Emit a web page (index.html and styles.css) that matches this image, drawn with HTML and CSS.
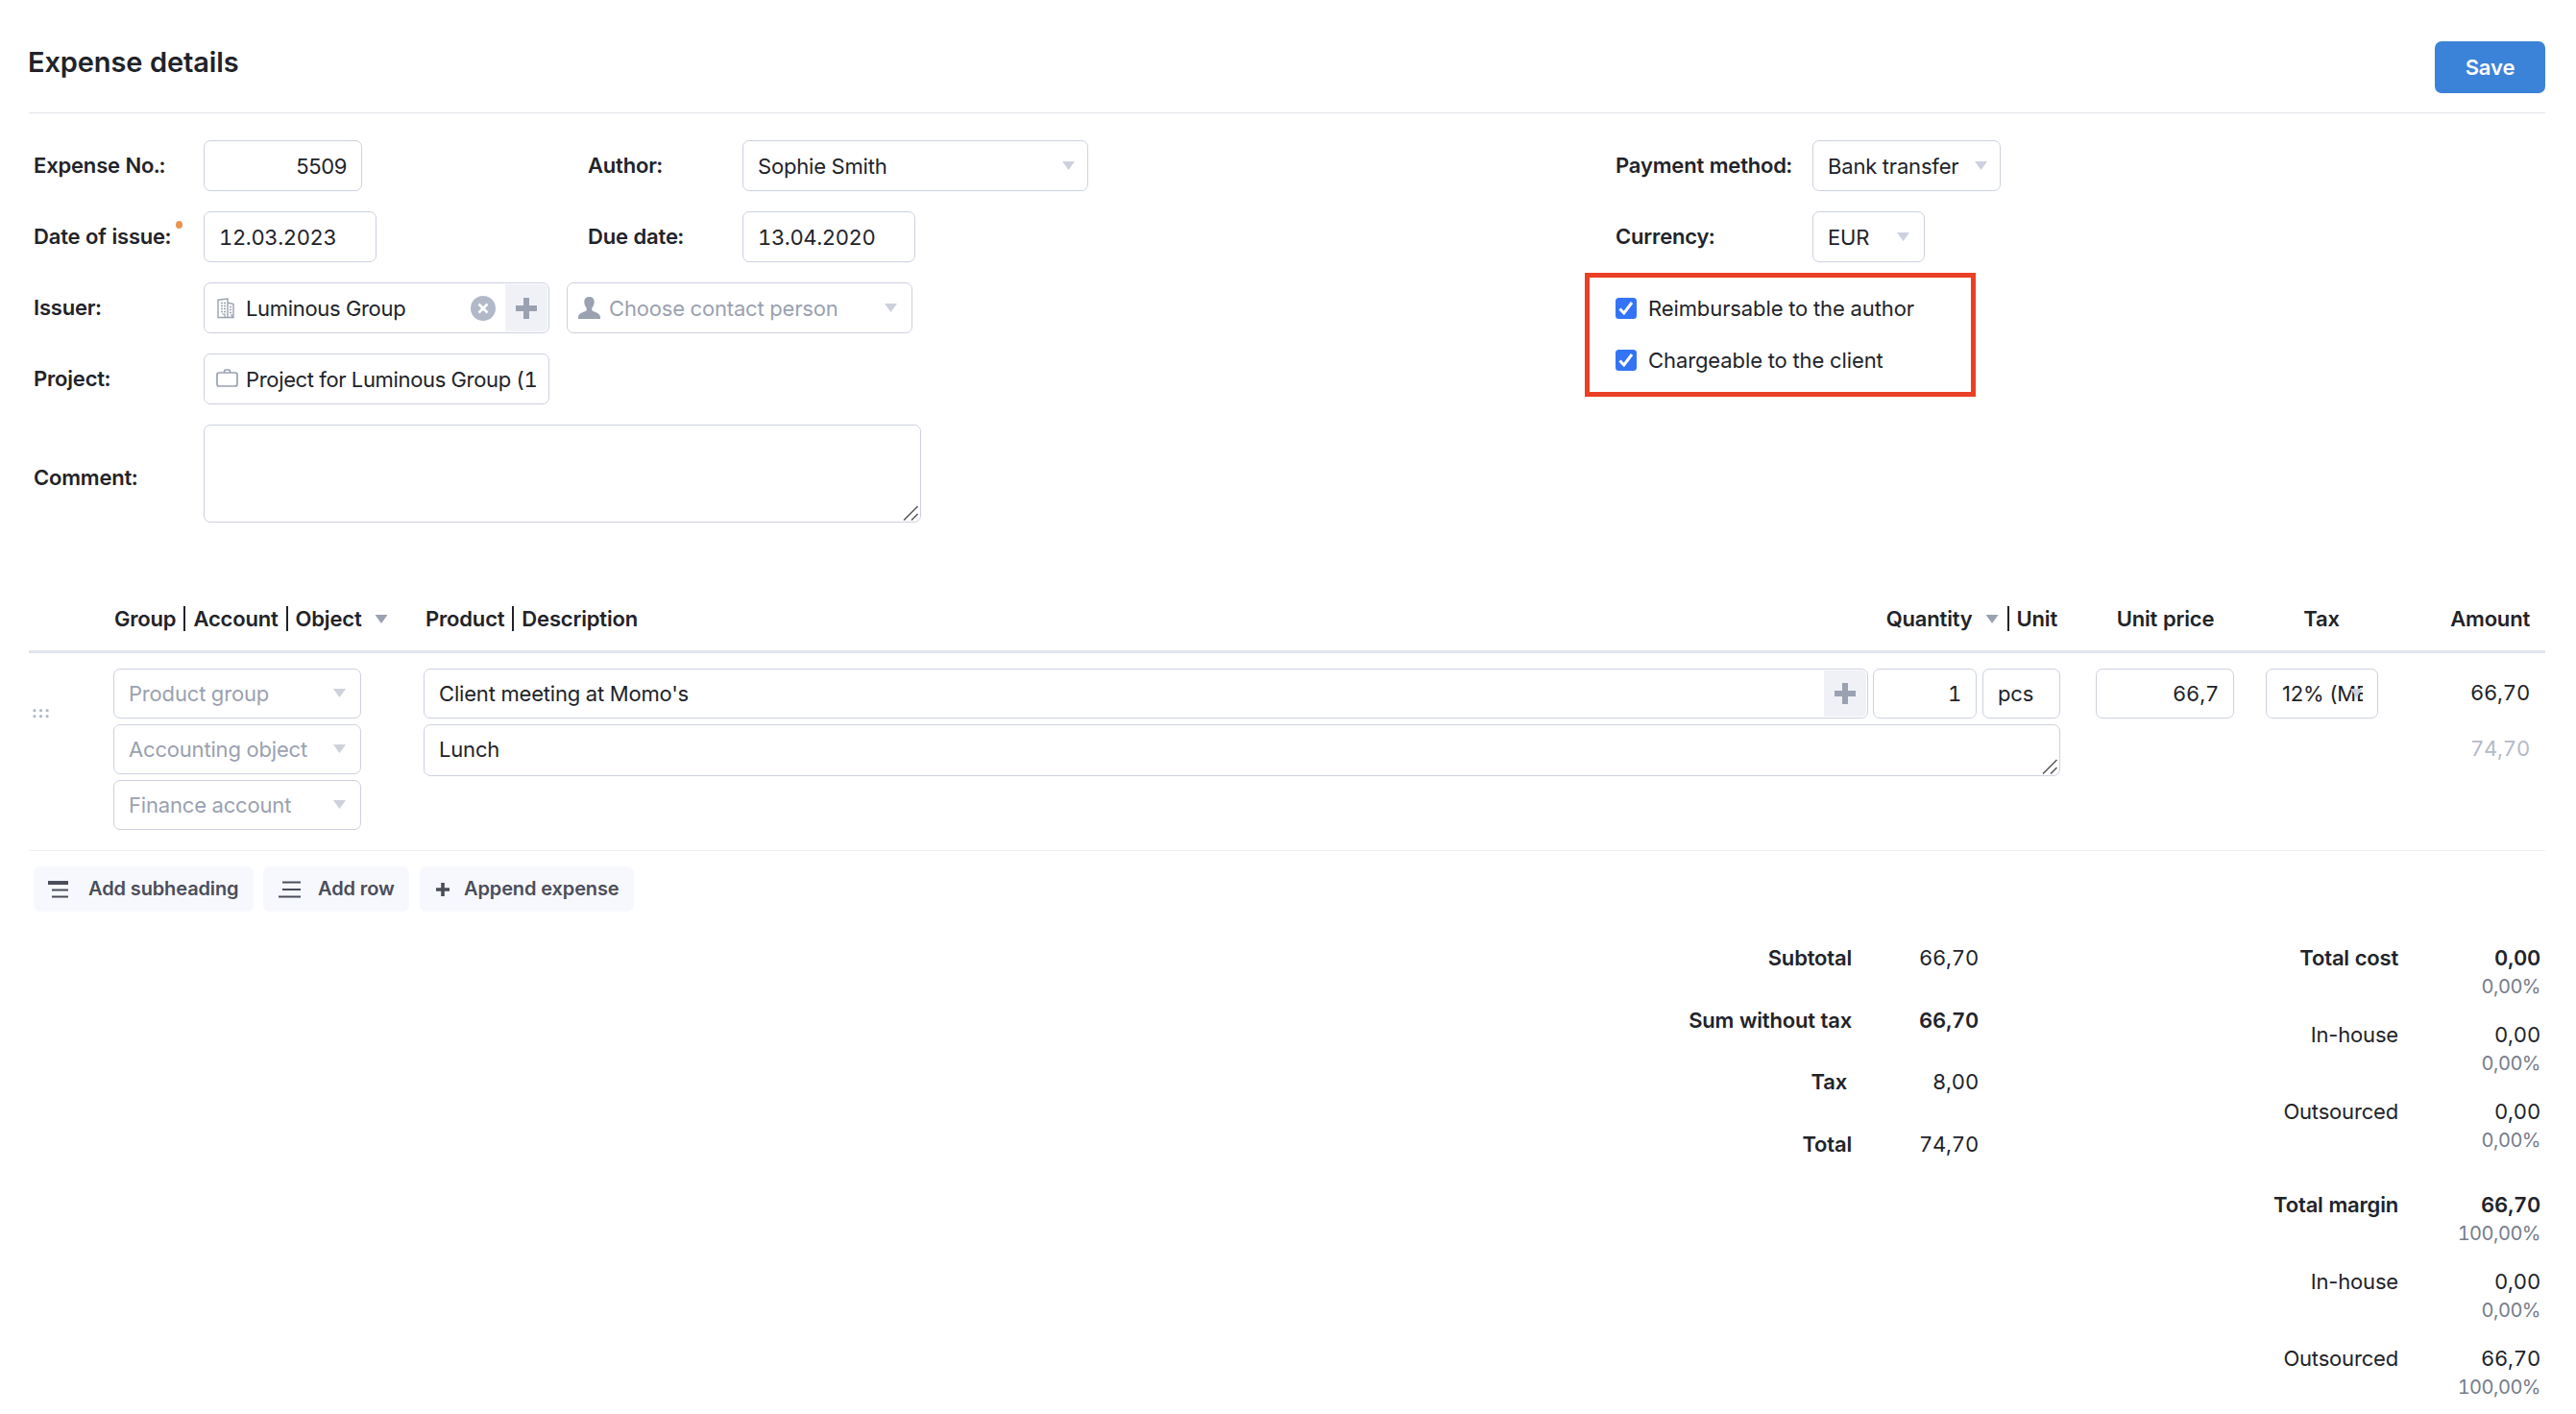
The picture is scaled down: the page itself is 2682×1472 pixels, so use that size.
FILE: index.html
```html
<!DOCTYPE html>
<html lang="en">
<head>
  <meta charset="UTF-8">
  <meta name="viewport" content="width=device-width, initial-scale=1.0">
  <title>Expense details</title>
  <link rel="stylesheet" href="styles.css">
</head>
<body>

  <header class="page-header">
    <h1>Expense details</h1>
    <button class="save" type="button">Save</button>
  </header>

  <section class="form">
    <div class="form-left">
      <div class="form-row">
        <label class="label">Expense No.:</label>
        <div class="field field-number">5509</div>
        <label class="label label-second">Author:</label>
        <div class="field field-author">Sophie Smith <i class="arrow"></i></div>
      </div>
      <div class="form-row">
        <label class="label">Date of issue:<i class="required"></i></label>
        <div class="field field-date">12.03.2023</div>
        <label class="label label-second label-due">Due date:</label>
        <div class="field field-date">13.04.2020</div>
      </div>
      <div class="form-row">
        <label class="label">Issuer:</label>
        <div class="field field-wide has-icon">
          <svg class="icon-building" width="18" height="22" viewBox="0 0 18 22" fill="none" stroke="#9aa1b1">
            <path d="M1 2.2L11 1V20.5H1zM11 5L17 6.5V20.5H11" stroke-width="1.4"/>
            <path d="M4 5.5h5M4 8.5h5M4 11.5h5M4 14.5h5M13 9.5h3M13 12.5h3M13 15.5h3" stroke-width="1.6" stroke-dasharray="2 1"/>
            <path d="M5 17h3v3M14 18h1.500v2" stroke-width="1.2"/>
          </svg>
          <span>Luminous Group</span>
          <svg class="clear" width="26" height="26" viewBox="0 0 26 26">
            <circle cx="13" cy="13" r="13" fill="#b1b8c8"/>
            <path d="M8.500 8.500l9 9M17.500 8.500l-9 9" stroke="#fff" stroke-width="2.600"/>
          </svg>
          <div class="add"><svg width="22" height="22" viewBox="0 0 22 22"><path d="M11 0v22M0 11h22" stroke="#9aa1b0" stroke-width="6"/></svg></div>
        </div>
        <div class="field field-wide field-contact has-icon placeholder">
          <svg class="icon-person" width="23" height="23" viewBox="0 0 23 23" fill="#9aa1b0">
            <path d="M11.500 0C8 0 6.300 2 6.300 5c0 2.600.9 5 2.400 6.500v2.600C7.500 16 0 16.500 0 21v2h23v-2c0-4.500-7.500-5-8.700-6.900v-2.600C15.800 10 16.700 7.600 16.700 5c0-3-1.700-5-5.200-5z"/>
          </svg>
          <span>Choose contact person</span>
          <i class="arrow"></i>
        </div>
      </div>
      <div class="form-row">
        <label class="label">Project:</label>
        <div class="field field-wide has-icon">
          <svg class="icon-case" width="23" height="19" viewBox="0 0 23 19" fill="none" stroke="#9aa1b1" stroke-width="1.700">
            <rect x="1" y="4" width="21" height="14" rx="2"/>
            <path d="M8.500 4V2.500a1.500 1.500 0 0 1 1.500-1.500h3a1.500 1.500 0 0 1 1.500 1.500V4"/>
          </svg>
          <span>Project for Luminous Group (1</span>
        </div>
      </div>
      <div class="form-row">
        <label class="label label-comment">Comment:</label>
        <div class="field field-comment">
          <svg class="grip" width="16" height="16" viewBox="0 0 16 16" stroke="#555" stroke-width="1.500"><path d="M1 15.500L15.500 1M9 15.500L15.500 9"/></svg>
        </div>
      </div>
    </div>

    <div class="form-right">
      <div class="form-row">
        <label class="label label-pay">Payment method:</label>
        <div class="field field-method">Bank transfer <i class="arrow"></i></div>
      </div>
      <div class="form-row">
        <label class="label label-pay">Currency:</label>
        <div class="field field-currency">EUR <i class="arrow"></i></div>
      </div>
      <div class="highlight">
        <div class="check">
          <svg width="22" height="22" viewBox="0 0 22 22"><rect width="22" height="22" rx="3.500" fill="#3374f5"/><path d="M4.500 11.500l4.300 4.500L17 5" fill="none" stroke="#fff" stroke-width="3"/></svg>
          <span>Reimbursable to the author</span>
        </div>
        <div class="check">
          <svg width="22" height="22" viewBox="0 0 22 22"><rect width="22" height="22" rx="3.500" fill="#3374f5"/><path d="M4.500 11.500l4.300 4.500L17 5" fill="none" stroke="#fff" stroke-width="3"/></svg>
          <span>Chargeable to the client</span>
        </div>
      </div>
    </div>
  </section>

  <section class="items">
    <div class="items-head">
      <div class="head-group">Group<b class="pipe"></b>Account<b class="pipe"></b>Object <i class="arrow arrow-dark"></i></div>
      <div class="head-product">Product<b class="pipe"></b>Description</div>
      <div class="head-quantity">Quantity <i class="arrow arrow-dark"></i><b class="pipe"></b>Unit</div>
      <div class="head-price">Unit price</div>
      <div class="head-tax">Tax</div>
      <div class="head-amount">Amount</div>
    </div>

    <div class="item">
      <div class="handle">
        <svg width="17" height="10" viewBox="0 0 17 10" fill="#b4bac9"><circle cx="1.900" cy="1.700" r="1.600"/><circle cx="8.500" cy="1.700" r="1.600"/><circle cx="15.100" cy="1.700" r="1.600"/><circle cx="1.900" cy="7.700" r="1.600"/><circle cx="8.500" cy="7.700" r="1.600"/><circle cx="15.100" cy="7.700" r="1.600"/></svg>
      </div>
      <div class="item-group">
        <div class="field placeholder">Product group <i class="arrow"></i></div>
        <div class="field placeholder">Accounting object <i class="arrow"></i></div>
        <div class="field placeholder">Finance account <i class="arrow"></i></div>
      </div>
      <div class="item-main">
        <div class="item-line">
          <div class="field field-product">
            <span>Client meeting at Momo's</span>
            <div class="add"><svg width="22" height="22" viewBox="0 0 22 22"><path d="M11 0v22M0 11h22" stroke="#9aa1b0" stroke-width="6"/></svg></div>
          </div>
          <div class="field field-quantity">1</div>
          <div class="field field-unit">pcs</div>
        </div>
        <div class="field field-description">
          <span>Lunch</span>
          <svg class="grip" width="16" height="16" viewBox="0 0 16 16" stroke="#555" stroke-width="1.500"><path d="M1 15.500L15.500 1M9 15.500L15.500 9"/></svg>
        </div>
      </div>
      <div class="field field-price">66,7</div>
      <div class="field field-tax"><span>12% (ME</span><i class="arrow"></i></div>
      <div class="item-amount">
        <div>66,70</div>
        <div class="with-tax">74,70</div>
      </div>
    </div>
  </section>

  <div class="actions">
    <button class="action action-sub" type="button">
      <svg width="21" height="18" viewBox="0 0 21 18" stroke="#4a4e5a"><path d="M0 2h21" stroke-width="4"/><path d="M4 9.500h17M4 16.500h17" stroke-width="2"/></svg>
      Add subheading
    </button>
    <button class="action action-row" type="button">
      <svg width="23" height="18" viewBox="0 0 23 18" stroke="#4a4e5a" stroke-width="2"><path d="M4 1.500h19M4 9h19M0 16.500h23"/></svg>
      Add row
    </button>
    <button class="action action-append" type="button">
      <svg width="14" height="14" viewBox="0 0 14 14" stroke="#4a4e5a" stroke-width="3.600"><path d="M7 0v14M0 7h14"/></svg>
      Append expense
    </button>
  </div>

  <section class="totals">
    <div class="sums">
      <div class="sum"><b>Subtotal</b><span>66,70</span></div>
      <div class="sum"><b>Sum without tax</b><b>66,70</b></div>
      <div class="sum"><b class="sum-tax">Tax</b><span>8,00</span></div>
      <div class="sum"><b>Total</b><span>74,70</span></div>
    </div>
    <div class="costs">
      <div class="cost"><b>Total cost</b><div><b>0,00</b><small>0,00%</small></div></div>
      <div class="cost"><span>In-house</span><div>0,00<small>0,00%</small></div></div>
      <div class="cost"><span>Outsourced</span><div>0,00<small>0,00%</small></div></div>
      <div class="cost cost-margin"><b>Total margin</b><div><b>66,70</b><small>100,00%</small></div></div>
      <div class="cost"><span>In-house</span><div>0,00<small>0,00%</small></div></div>
      <div class="cost"><span>Outsourced</span><div>66,70<small>100,00%</small></div></div>
    </div>
  </section>

</body>
</html>
```
FILE: styles.css
```css
* {
  margin: 0;
  padding: 0;
  box-sizing: border-box;
}

body {
  font-family: Inter, 'Liberation Sans', sans-serif;
  font-size: 22px;
  font-variant-numeric: tabular-nums;
  line-height: 30px;
  letter-spacing: -0.18px;
  color: #212329;
  background-color: #fff;
  padding: 0 32px 0 30px;
  overflow: hidden;
}

b {
  font-weight: 600;
}

svg {
  display: block;
  flex: none;
}

.page-header {
  display: flex;
  justify-content: space-between;
  align-items: flex-start;
  height: 118px;
  padding-top: 43px;
  border-bottom: 1px solid #e2e3ea;
}

h1 {
  font-size: 29px;
  font-weight: 600;
  line-height: 43px;
  letter-spacing: -0.12px;
  margin-left: -1px;
}

.save {
  width: 115px;
  height: 54px;
  padding-bottom: 1px;
  border: none;
  border-radius: 7px;
  background-color: #3b82d9;
  color: #fff;
  font: 600 22px Inter, sans-serif;
  letter-spacing: -0.1px;
}

/* form */
.form {
  display: flex;
  padding-top: 28px;
}

.form-left {
  width: 1652px;
  padding-left: 5px;
}

.form-row {
  display: flex;
  align-items: center;
  margin-bottom: 21px;
}

.label {
  position: relative;
  width: 177px;
  padding-bottom: 1px;
  font-weight: 600;
  white-space: nowrap;
}

.label-second {
  width: 161px;
  margin-left: 235px;
}

.label-due {
  margin-left: 220px;
}

.label-comment {
  padding: 8px 0 0;
}

.label-pay {
  width: 205px;
}

.required {
  position: absolute;
  left: 148px;
  top: -1px;
  width: 7px;
  height: 8px;
  border-radius: 50%;
  background-color: #e8954c;
}

.field {
  position: relative;
  display: flex;
  align-items: center;
  height: 53px;
  padding: 0 15px;
  border: 1px solid #cdd1e0;
  border-radius: 7px;
  white-space: nowrap;
  flex: none;
}

.placeholder {
  color: #9aa1b0;
}

.arrow {
  width: 13px;
  height: 9px;
  margin-left: auto;
  background-color: #cdd1de;
  clip-path: polygon(0 0, 100% 0, 50% 100%);
}

.arrow-dark {
  background-color: #9aa1b0;
}

.field-number {
  width: 165px;
  justify-content: flex-end;
  font-variant-numeric: normal;
  letter-spacing: -0.4px;
}

.field-author {
  width: 360px;
  padding-right: 13px;
}

.field-date {
  width: 180px;
  letter-spacing: -0.35px;
}

.field-wide {
  width: 360px;
}

.field-contact {
  margin-left: 18px;
}

.has-icon {
  padding-left: 13px;
}

.has-icon span {
  margin-left: 12px;
}

.icon-building + span {
  letter-spacing: -0.32px;
}

.has-icon .icon-person {
  margin-left: -2px;
}

.has-icon .icon-person + span {
  margin-left: 9px;
}

.has-icon .icon-case {
  margin: 0 0 3px -1px;
}

.has-icon .icon-case + span {
  margin-left: 8px;
  letter-spacing: -0.34px;
}

.clear {
  margin-left: auto;
  margin-right: 10px;
}

.add {
  display: flex;
  align-items: center;
  justify-content: center;
  width: 44px;
  height: 49px;
  margin-right: -14px;
  border-radius: 0 5px 5px 0;
  background-color: #f0f1f7;
}

.field-comment {
  width: 747px;
  height: 102px;
}

.grip {
  position: absolute;
  right: 2px;
  bottom: 1px;
}

.field-method {
  width: 196px;
  padding-right: 13px;
}

.field-currency {
  width: 117px;
}

.highlight {
  width: 407px;
  height: 129px;
  margin: -10px 0 0 -32px;
  padding: 17px 27px;
  border: 5px solid #ea4025;
}

.check {
  display: flex;
  align-items: center;
  gap: 12px;
  margin-bottom: 24px;
  letter-spacing: -0.1px;
}

/* items table */
.items-head {
  display: flex;
  align-items: center;
  height: 73px;
  margin-top: 42px;
  padding: 3px 0 0 89px;
  border-bottom: 3px solid #e2e5ee;
  font-weight: 600;
}

.items-head > div {
  display: flex;
  align-items: center;
}

.pipe {
  width: 2px;
  height: 26px;
  margin: 0 8px;
  background-color: #212329;
}

.head-group {
  width: 324px;
}

.head-group .arrow,
.head-quantity .arrow {
  margin-left: 14px;
  margin-top: 2px;
}

.head-quantity .pipe {
  margin-left: 9px;
}

.head-product {
  width: 1300px;
}

.head-quantity {
  justify-content: flex-end;
  width: 399px;
  margin-right: 1px;
}

.head-price {
  justify-content: center;
  width: 223px;
}

.head-tax {
  justify-content: center;
  width: 102px;
}

.head-amount {
  justify-content: flex-end;
  width: 166px;
}

.item {
  display: flex;
  align-items: flex-start;
  height: 206px;
  padding-top: 16px;
  border-bottom: 1px solid #eef0f5;
}

.item .field {
  height: 52px;
  padding-bottom: 1px;
}

.handle {
  width: 88px;
  padding: 42px 0 0 4px;
}

.item-group {
  display: flex;
  flex-direction: column;
  gap: 6px;
  width: 258px;
  margin-right: 65px;
}

.item-main {
  width: 1704px;
  margin-right: 37px;
}

.item-line {
  display: flex;
  margin-bottom: 6px;
}

.field-product {
  justify-content: space-between;
  width: 1504px;
  margin-right: 5px;
}

.field-product .add {
  height: 48px;
  margin-bottom: -1px;
}

.field-quantity {
  justify-content: flex-end;
  width: 108px;
  margin-right: 6px;
}

.field-unit {
  width: 81px;
}

.item .field-description {
  height: 54px;
  padding-bottom: 3px;
}

.field-price {
  justify-content: flex-end;
  width: 144px;
  margin-right: 33px;
}

.field-tax {
  width: 117px;
  padding: 0 15px 0 16px;
  font-variant-numeric: normal;
}

.field-tax span {
  width: 84px;
  overflow: hidden;
}

/* arrow sits on top of the clipped tax name */
.field-tax .arrow {
  position: absolute;
  right: 15px;
}

.item-amount {
  flex: 1;
  padding: 10px 16px 0 0;
  text-align: right;
}

.with-tax {
  margin-top: 28px;
  color: #b4bac9;
}

/* buttons under the table */
.actions {
  display: flex;
  padding: 16px 0 0 5px;
}

.action {
  display: flex;
  align-items: center;
  height: 47px;
  padding-bottom: 1px;
  border: none;
  border-radius: 7px;
  background-color: #f7f8fd;
  color: #4a4e5a;
  font: 600 20px Inter, sans-serif;
  letter-spacing: -0.12px;
  white-space: nowrap;
}

.action svg {
  margin-top: 2px;
}

.action-sub {
  width: 229px;
  margin-right: 10px;
  padding-left: 15px;
  gap: 21px;
}

.action-row {
  width: 152px;
  margin-right: 11px;
  padding-left: 16px;
  gap: 18px;
}

.action-append {
  width: 223px;
  padding-left: 17px;
  gap: 15px;
}

/* totals */
.totals {
  display: flex;
  justify-content: flex-end;
  padding: 33px 5px 0 0;
}

.sum {
  display: flex;
  justify-content: flex-end;
  height: 64.6px;
}

.sum > :last-child {
  width: 132px;
  text-align: right;
}

.sum-tax {
  margin-right: 5px;
}

.costs {
  width: 585px;
}

.cost {
  display: flex;
  justify-content: flex-end;
  height: 80px;
}

.cost > span {
  font-variant-numeric: normal;
}

.cost > div {
  width: 148px;
  text-align: right;
}

.cost div b,
.cost small {
  display: block;
}

.cost small {
  font-size: 20px;
  letter-spacing: -0.5px;
  color: #757c8c;
}

.cost-margin {
  margin-top: 17px;
}
```
